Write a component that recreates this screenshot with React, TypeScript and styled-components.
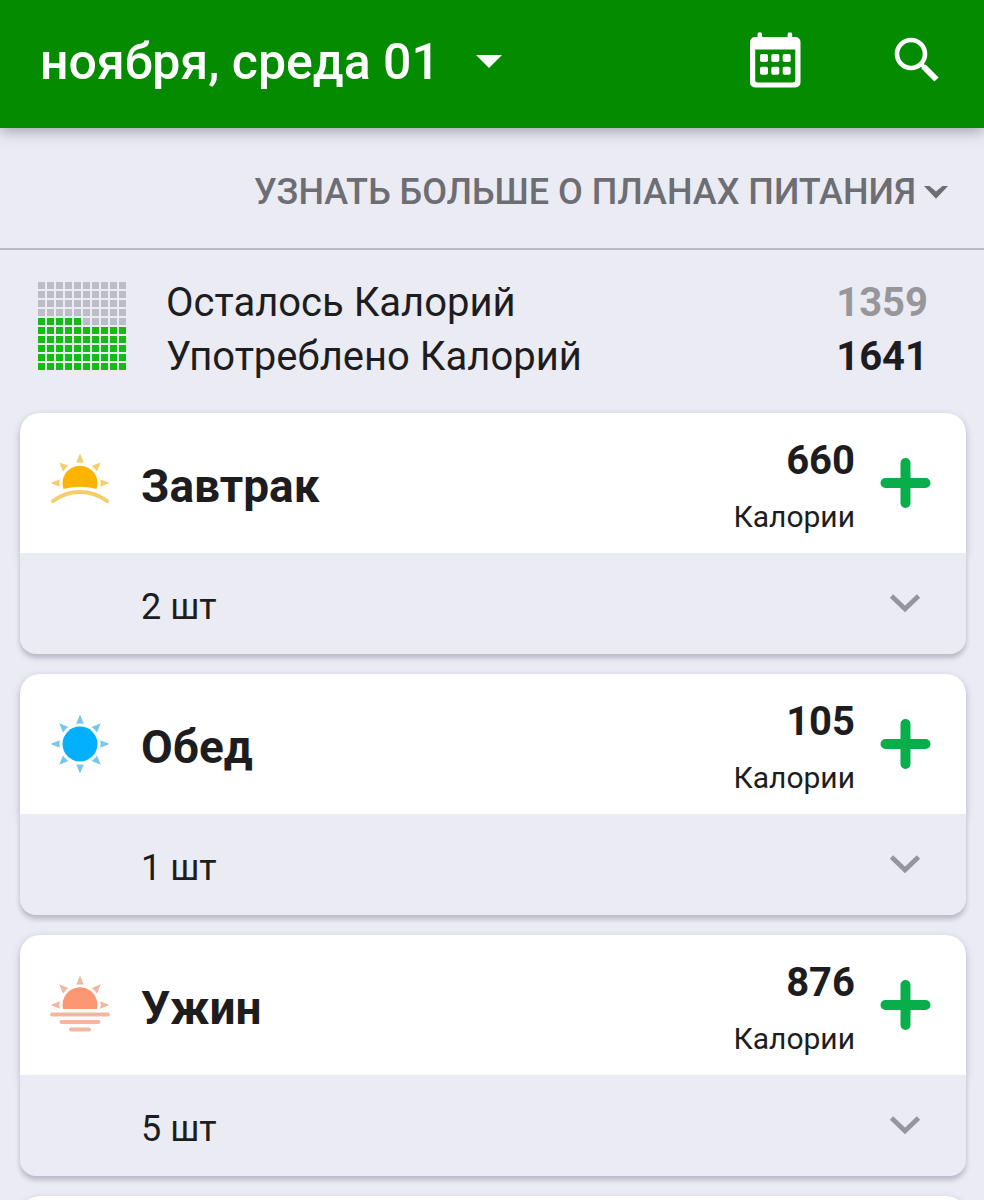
import React from "react";
import styled, { createGlobalStyle } from "styled-components";

const GlobalStyle = createGlobalStyle`
  *, *::before, *::after { box-sizing: border-box; }
  body {
    margin: 0;
    background: #ebebf4;
    color: #1d1d1f;
    font-family: Roboto, "Liberation Sans", sans-serif;
  }
  button {
    font: inherit;
    color: inherit;
    background: none;
    border: 0;
    padding: 0;
    cursor: pointer;
  }
  svg { display: block; flex: none; }
  h2 { margin: 0; }
`;

const Screen = styled.div`
  height: 100vh;
  overflow: hidden;
  display: flex;
  flex-direction: column;
`;

const AppBar = styled.header`
  flex: none;
  display: flex;
  align-items: center;
  height: 128px;
  padding: 0 44px 8px 40px;
  background: #048b00;
  color: #fff;
  box-shadow: 0 3px 14px rgba(60, 64, 80, 0.45);
`;

const DateButton = styled.button`
  display: flex;
  align-items: center;
  gap: 36px;
  margin-right: auto;
  padding-top: 4px;
  font-size: 50px;
  line-height: 64px;
  font-weight: 500;
  white-space: nowrap;
`;

const BarActions = styled.div`
  display: flex;
  align-items: center;
  gap: 93px;
`;

const PlansButton = styled.button`
  flex: none;
  display: flex;
  align-items: center;
  justify-content: flex-end;
  gap: 8px;
  width: 100%;
  height: 122px;
  padding: 8px 36px 0 0;
  border-bottom: 2px solid #b9b9c4;
  color: #6d6e74;
  font-size: 36px;
  line-height: 44px;
  font-weight: 500;
`;

const Summary = styled.section`
  flex: none;
  display: flex;
  align-items: center;
  gap: 40px;
  padding: 24px 56px 29px 38px;
`;

const Grid = styled.div`
  display: grid;
  grid-template-columns: repeat(10, 7px);
  grid-auto-rows: 7px;
  gap: 2px;
  margin-bottom: 6px;
`;

const Cell = styled.span<{ $filled: boolean }>`
  background: ${(p) => (p.$filled ? "#13bb13" : "#bdbdc8")};
`;

const Totals = styled.div`
  flex: 1;
  padding-top: 2px;
`;

const TotalRow = styled.div`
  display: flex;
  justify-content: space-between;
  font-size: 40px;
  line-height: 54px;
`;

const TotalValue = styled.span<{ $muted?: boolean }>`
  font-weight: 700;
  color: ${(p) => (p.$muted ? "#97979b" : "#1d1d1f")};
`;

const Meals = styled.main`
  display: flex;
  flex-direction: column;
  gap: 20px;
  padding: 0 18px 0 20px;
`;

const Card = styled.article`
  flex: none;
`;

const CardTop = styled.div`
  display: flex;
  align-items: center;
  height: 140px;
  padding: 0 35px 0 28px;
  background: #fff;
  border-radius: 20px 20px 0 0;
  box-shadow: 0 3px 7px rgba(70, 70, 95, 0.35);
`;

const MealName = styled.h2`
  flex: 1;
  margin-left: 29px;
  padding-top: 6px;
  font-size: 46px;
  line-height: 56px;
  font-weight: 700;
`;

const Energy = styled.div`
  display: flex;
  flex-direction: column;
  align-items: flex-end;
  margin-right: 25px;
  padding-top: 12px;
  line-height: 56px;
`;

const EnergyValue = styled.strong`
  font-size: 40px;
`;

const EnergyUnit = styled.span`
  font-size: 30px;
`;

const CardBottom = styled.button`
  position: relative;
  display: flex;
  align-items: center;
  justify-content: space-between;
  width: 100%;
  height: 101px;
  padding: 0 45px 0 121px;
  background: #ebebf4;
  border-radius: 0 0 16px 16px;
  box-shadow: 0 4px 5px rgba(70, 70, 95, 0.3);
  font-size: 36px;
  line-height: 44px;
`;

const Count = styled.span`
  padding-top: 6px;
`;

type SunKind = "sunrise" | "noon" | "sunset";

const sunColors: Record<SunKind, { disc: string; accent: string }> = {
  sunrise: { disc: "#fdb400", accent: "#f5ce6c" },
  noon: { disc: "#03b0fc", accent: "#77c7ea" },
  sunset: { disc: "#fd9672", accent: "#f3b7a1" },
};

const SunIcon = ({ kind }: { kind: SunKind }) => {
  const { disc, accent } = sunColors[kind];
  const angles =
    kind === "noon" ? [0, 45, 90, 135, 180, 225, 270, 315] : [270, 315, 0, 45, 90];
  return (
    <svg width="64" height="64" viewBox="-32 -32 64 64" aria-hidden="true">
      {angles.map((a) => (
        <path key={a} d="M0-29.5 3.8-20.2Q0-21-3.8-20.2Z" fill={accent} transform={`rotate(${a})`} />
      ))}
      {kind === "noon" && <circle r="17.5" fill={disc} />}
      {kind === "sunrise" && (
        <>
          <path d="M-16.5 6A17.5 17.5 0 1 1 16.5 6Q0 1.5-16.5 6Z" fill={disc} />
          <path
            d="M-27 18Q-15 9 0 9T27 18"
            fill="none"
            stroke={accent}
            strokeWidth="4"
            strokeLinecap="round"
          />
        </>
      )}
      {kind === "sunset" && (
        <>
          <path d="M-17 4A17.5 17.5 0 1 1 17 4Z" fill={disc} />
          <path
            d="M-28 9.5H28M-18.5 17H18.5M-9 24.5H9"
            stroke={accent}
            strokeWidth="3.8"
            strokeLinecap="round"
          />
        </>
      )}
    </svg>
  );
};

const CalendarIcon = () => (
  <svg width="52" height="56" viewBox="0 0 52 56" aria-hidden="true">
    <path
      fill="currentColor"
      fillRule="evenodd"
      d="M8.5 2.5a2.3 2.3 0 0 1 4.6 0V5h25.5V2.5a2.3 2.3 0 0 1 4.6 0V5H46.5a5 5 0 0 1 5 5V50.5a5 5 0 0 1-5 5H6a5 5 0 0 1-5-5V10a5 5 0 0 1 5-5H8.5ZM6.200 17.500V48a2.500 2.500 0 0 0 2.500 2.500H43.800a2.500 2.500 0 0 0 2.500-2.500V17.500Z"
    />
    {[22, 34.7].map((y) =>
      [11, 22.3, 33.7].map((x) => (
        <rect key={`${x}-${y}`} x={x} y={y} width="8" height="8" rx="1.8" fill="currentColor" />
      )),
    )}
  </svg>
);

const SearchIcon = () => (
  <svg width="46" height="46" viewBox="0 0 46 46" fill="none" stroke="currentColor" aria-hidden="true">
    <circle cx="17" cy="17" r="14" strokeWidth="4.6" />
    <path d="M27 27 30 30" strokeWidth="4" />
    <path d="M29.500 29.500 42.500 42.500" strokeWidth="6" />
  </svg>
);

const PlusIcon = () => (
  <svg width="51" height="50" viewBox="0 0 51 50" aria-hidden="true">
    <path d="M25.5 5V45M5.5 25H45.5" stroke="#07ae49" strokeWidth="10" strokeLinecap="round" />
  </svg>
);

const ChevronIcon = () => (
  <svg width="32" height="20" viewBox="0 0 32 20" aria-hidden="true">
    <path d="M2.500 2 16 15 29.500 2" fill="none" stroke="#94959f" strokeWidth="4.800" />
  </svg>
);

const meals: { name: string; kcal: number; count: number; sun: SunKind }[] = [
  { name: "Завтрак", kcal: 660, count: 2, sun: "sunrise" },
  { name: "Обед", kcal: 105, count: 1, sun: "noon" },
  { name: "Ужин", kcal: 876, count: 5, sun: "sunset" },
];

const isFilled = (i: number) => i >= 50 || (i >= 40 && i < 45);

export default function App() {
  return (
    <>
      <GlobalStyle />
      <Screen>
        <AppBar>
          <DateButton type="button" aria-haspopup="true">
            ноября, среда 01
            <svg width="26" height="14" viewBox="0 0 26 14" aria-hidden="true">
              <path d="M0 0H26L13 13Z" fill="currentColor" />
            </svg>
          </DateButton>
          <BarActions>
            <button type="button" aria-label="Календарь">
              <CalendarIcon />
            </button>
            <button type="button" aria-label="Поиск">
              <SearchIcon />
            </button>
          </BarActions>
        </AppBar>

        <PlansButton type="button">
          УЗНАТЬ БОЛЬШЕ О ПЛАНАХ ПИТАНИЯ
          <svg width="24" height="13" viewBox="0 0 24 13" aria-hidden="true">
            <path d="M0 0H5.5L12 5.500 18.500 0H24L12 12.700Z" fill="currentColor" />
          </svg>
        </PlansButton>

        <Summary>
          <Grid aria-hidden="true">
            {Array.from({ length: 100 }, (_, i) => (
              <Cell key={i} $filled={isFilled(i)} />
            ))}
          </Grid>
          <Totals>
            <TotalRow>
              <span>Осталось Калорий</span>
              <TotalValue $muted>1359</TotalValue>
            </TotalRow>
            <TotalRow>
              <span>Употреблено Калорий</span>
              <TotalValue>1641</TotalValue>
            </TotalRow>
          </Totals>
        </Summary>

        <Meals>
          {meals.map((meal) => (
            <Card key={meal.name}>
              <CardTop>
                <SunIcon kind={meal.sun} />
                <MealName>{meal.name}</MealName>
                <Energy>
                  <EnergyValue>{meal.kcal}</EnergyValue>
                  <EnergyUnit>Калории</EnergyUnit>
                </Energy>
                <button type="button" aria-label="Добавить">
                  <PlusIcon />
                </button>
              </CardTop>
              <CardBottom type="button" aria-expanded="false">
                <Count>{meal.count} шт</Count>
                <ChevronIcon />
              </CardBottom>
            </Card>
          ))}
          <Card>
            <CardTop />
          </Card>
        </Meals>
      </Screen>
    </>
  );
}
